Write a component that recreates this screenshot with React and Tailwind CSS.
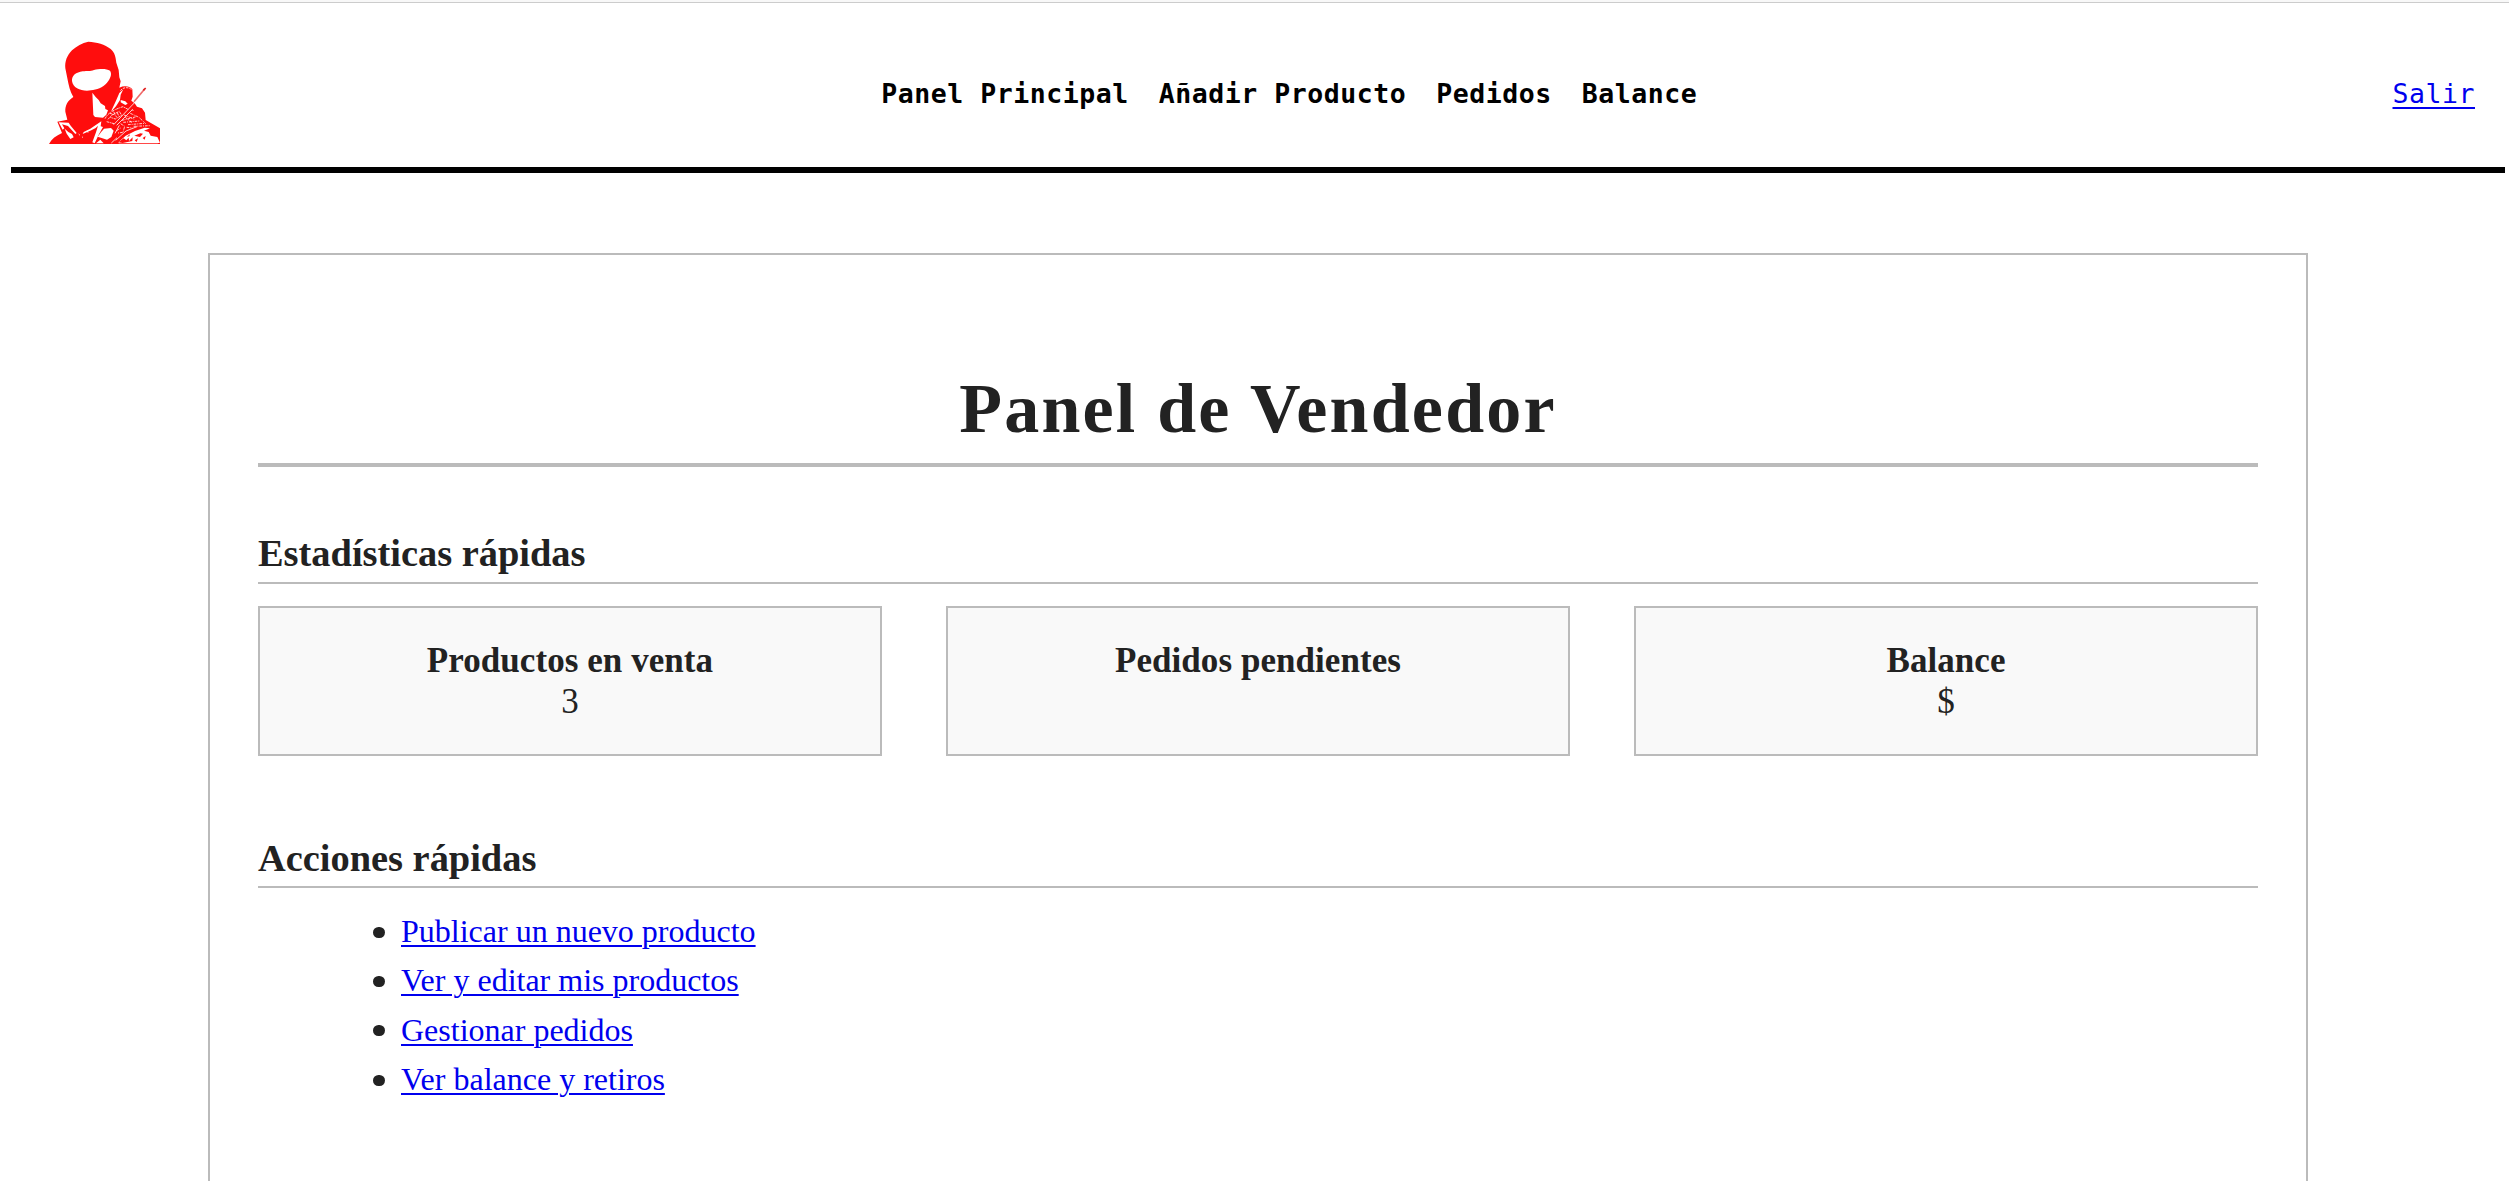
const navItems = ["Panel Principal", "Añadir Producto", "Pedidos", "Balance"];

const stats = [
  { title: "Productos en venta", value: "3" },
  { title: "Pedidos pendientes", value: "" },
  { title: "Balance", value: "$" },
];

const actions = [
  "Publicar un nuevo producto",
  "Ver y editar mis productos",
  "Gestionar pedidos",
  "Ver balance y retiros",
];

function Logo() {
  return (
    <svg viewBox="147 123 333 309" className="mr-[26px] h-[103px] w-[111px]" aria-label="Logo">
      <path
        fill="#ff0d0d"
        fillRule="evenodd"
        d="M265 125C290 126 315 133 332 147C345 158 347 172 349 188L356 210L358 232L362 244L358 263C372 256 390 258 397 268L398 290L394 302L404 310L411 320L426 325L435 338L437 360L480 385V432H147C155 417 168 407 186 399L172 365L202 359L196 335C195 316 203 302 220 291C210 276 206 255 202 235L196 205C194 185 201 166 216 151C230 138 246 129 265 125ZM216 243C215 226 228 217 248 214C262 212 270 215 282 210C297 206 320 205 330 212C337 222 331 236 321 248C308 264 290 268 273 271C247 275 219 266 216 243Z"
      />
      <g fill="#fff">
        <path d="M277 278L287 291L296 300L302 310L315 318L316 327L324 331L319 344L309 353L285 351L280 345Z" />
        <path d="M176 367L206 368L212 377L230 399L226 402L204 378L186 373L193 385L188 389Z" />
        <path d="M194 386L205 396L216 402L221 412L211 417L200 401Z" />
        <path d="M304 364L284 377L271 386L251 396L248 402L274 391L287 384L294 377L288 397L277 427L284 430L296 404L309 381L302 379Z" />
        <path d="M312 386L333 384L341 392L334 411L321 419L293 410L303 397Z" />
        <path d="M334 332L348 302L358 279L370 268L362 284L360 300L348 319L336 332Z" />
        <path d="M362 300L376 304L383 311L376 315L362 307Z" />
        <path d="M288 430L301 419L311 430Z" />
        <path d="M356 426L377 407L405 393L434 383L450 385L432 392L446 396L452 407L472 411L480 428L472 430H356Z" />
      </g>
      <g stroke="#fff" fill="none" strokeWidth="2.4">
        <path d="M361 272C368 261 388 260 394 269" strokeDasharray="7 3" />
        <path d="M341 374L394 318L404 308M350 376L398 328" />
        <path d="M315 356C324 338 344 328 369 320L386 329M324 358L336 345L358 334L365 346L346 357L331 352M341 335L350 352M320 365L342 371M330 340L345 345M352 338L356 348" strokeDasharray="8 2 3 2" />
        <path d="M366 361L409 350M370 367L418 363M384 374L434 370M362 371L374 379L369 397L354 399M350 392L362 384M391 340L417 352L437 371M376 352L398 369M401 379L450 377M372 345L404 358M380 382L398 384" strokeDasharray="8 3 3 3" />
        <path d="M347 421L378 393L411 380M334 429L351 413M345 400L358 376" />
        <path d="M397 329L400 333M236 402L240 406M262 392L264 398M246 411L249 412" />
      </g>
      <g fill="#ff0d0d">
        <path d="M355 427L371 415L379 421L386 413L387 423L398 412L397 423L368 429Z" />
        <path d="M403 407L421 400L429 401L420 411L409 409ZM428 414L437 408L434 419ZM404 421L414 415L410 426ZM380 410L390 403L388 409Z" />
      </g>
      <path d="M402 305L434 267" stroke="#f06a6a" strokeWidth="5" />
      <path d="M430 271L437 264" stroke="#e02020" strokeWidth="5" />
    </svg>
  );
}

function SectionHeading({ children, className }) {
  return (
    <h2 className={"border-b-2 border-[#bbb] text-[38.4px] leading-[44px] font-bold " + className}>
      {children}
    </h2>
  );
}

export default function App() {
  return (
    <div className="h-[1181px] overflow-hidden bg-white font-['Liberation_Serif',serif] text-[#222]">
      <div className="h-[3px] border-b border-[#ccc] bg-[#f8f8f8]" />
      <header className="mr-1 ml-[11px] flex h-[170px] items-center justify-between border-b-[6px] border-black pr-[30px] pl-[38px] font-['DejaVu_Sans_Mono',monospace] text-[26.5px] leading-8 tracking-[0.54px]">
        <div className="mt-[15px]">
          <Logo />
        </div>
        <nav className="mt-[18px] flex gap-[30px] font-bold text-black">
          {navItems.map((item) => (
            <a key={item} href="#">{item}</a>
          ))}
        </nav>
        <a href="#" className="mt-[18px] text-[#00e] underline decoration-2 underline-offset-4">
          Salir
        </a>
      </header>
      <main className="mt-20 ml-[208px] h-[1100px] w-[2100px] border-2 border-[#bbb] px-12 pt-[112px]">
        <h1 className="border-b-4 border-[#bbb] pb-3 text-center text-[70px] leading-[84px] font-bold tracking-[2.2px]">
          Panel de Vendedor
        </h1>
        <section>
          <SectionHeading className="mt-16 pb-[7px]">Estadísticas rápidas</SectionHeading>
          <div className="mt-[22px] grid grid-cols-3 gap-16">
            {stats.map((s) => (
              <div
                key={s.title}
                className="h-[150px] border-2 border-[#bbb] bg-[#f9f9f9] pt-8 text-center text-[35px] leading-[41px]"
              >
                <h3 className="font-bold tracking-[0.06px]">{s.title}</h3>
                <p>{s.value}</p>
              </div>
            ))}
          </div>
        </section>
        <section>
          <SectionHeading className="mt-20 pb-[6px]">Acciones rápidas</SectionHeading>
          <ul className="mt-[19px] ml-[115px] text-[32px] leading-[49.33px]">
            {actions.map((a) => (
              <li key={a} className="flex items-center">
                <span className="mt-px mr-[16px] h-[11px] w-3 rounded-full bg-[#222]" />
                <a href="#" className="text-[#00e] underline decoration-2 underline-offset-[3px]">{a}</a>
              </li>
            ))}
          </ul>
        </section>
      </main>
    </div>
  );
}
